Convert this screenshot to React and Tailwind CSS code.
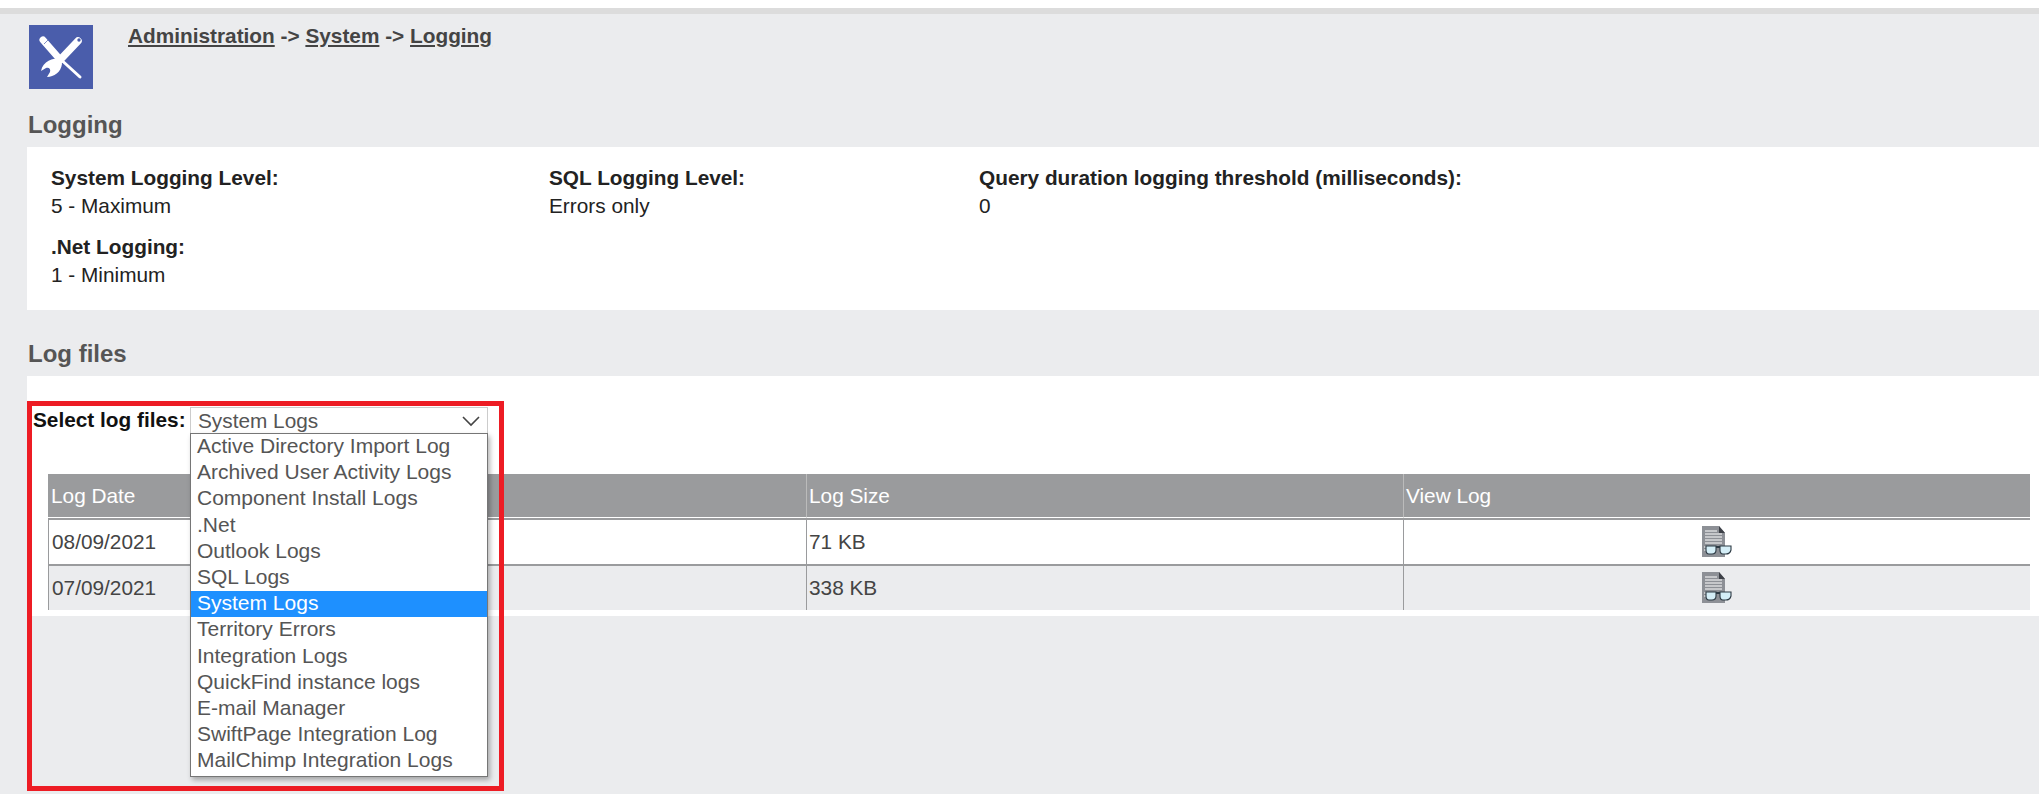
const LOG_TYPES = [
  'Active Directory Import Log',
  'Archived User Activity Logs',
  'Component Install Logs',
  '.Net',
  'Outlook Logs',
  'SQL Logs',
  'System Logs',
  'Territory Errors',
  'Integration Logs',
  'QuickFind instance logs',
  'E-mail Manager',
  'SwiftPage Integration Log',
  'MailChimp Integration Logs',
];

const LOG_ROWS = [
  { date: '08/09/2021', size: '71 KB', bg: 'bg-white' },
  { date: '07/09/2021', size: '338 KB', bg: 'bg-[#ebecee]' },
];

function ToolsIcon() {
  return (
    <svg viewBox="0 0 64 64" className="w-[64px] h-[64px] bg-[#4a5dab] shrink-0 mr-[35px]">
      {/* screwdriver */}
      <path d="M14 15 L28 31" stroke="#fff" strokeWidth="7" strokeLinecap="round" />
      <path d="M15 19 L20 14" stroke="#4a5dab" strokeWidth="0.7" />
      <path d="M28 31 L51 52" stroke="#fff" strokeWidth="3" strokeLinecap="round" />
      {/* wrench */}
      <path d="M49 16 L31 35" stroke="#fff" strokeWidth="7.5" strokeLinecap="round" />
      <path
        d="M31 33 C24 33 14 36 12 46 L17 43 C20 42 22 44 21 47 L18 52 C25 52 32 47 33 39 Z"
        fill="#fff"
      />
      <circle cx="50" cy="15" r="1.7" fill="#4a5dab" />
    </svg>
  );
}

function ViewLogIcon() {
  return (
    <svg viewBox="0 0 30 31" className="w-[30px] h-[31px] block mx-auto">
      <path d="M0 0 H17 L23 7 V31 H0 Z" fill="#8d9096" />
      <path d="M17 0 L23 7 H17 Z" fill="#3d4047" />
      <path d="M3 5 H15 M3 8 H20 M3 11 H20 M3 14 H20 M3 17 H20 M2 21 H4 M2 24 H4" stroke="#fff" strokeWidth="1" />
      <path d="M4 20 H14 V24 Q14 28 10 28 H7 Q4 28 4 24 Z" fill="#d4eef7" stroke="#2d3a44" strokeWidth="1.1" />
      <path d="M18 20 H29 V24 Q28 28 24 28 H21 Q18 28 18 24 Z" fill="#d4eef7" stroke="#2d3a44" strokeWidth="1.1" />
      <path d="M14 21 H18" stroke="#2d3a44" strokeWidth="2" />
    </svg>
  );
}

function Field({ label, value, className }) {
  return (
    <div className={className}>
      <p className="font-bold h-[28px] leading-[28px]">{label}</p>
      <p className="h-[28px] leading-[28px]">{value}</p>
    </div>
  );
}

export default function App() {
  return (
    <div className="h-[794px] bg-[#ebecee] text-[20.8px] text-[#222] overflow-hidden font-['Liberation_Sans',Arial,sans-serif]">
      <div className="h-[8px] bg-white" />
      <div className="h-[6px] bg-[#dcdcdc]" />

      {/* Breadcrumb */}
      <div className="flex items-start pl-[29px] pt-[11px] h-[100px]">
        <ToolsIcon />
        <div className="font-bold text-[#444] leading-[21px]">
          <a className="underline">Administration</a> -&gt; <a className="underline">System</a> -&gt; <a className="underline">Logging</a>
        </div>
      </div>

      <h2 className="pl-[28px] h-[33px] leading-[22px] text-[24px] font-bold text-[#555]">Logging</h2>

      {/* Settings */}
      <div className="ml-[27px] bg-white h-[163px] pl-[24px] pt-[17px]">
        <div className="flex">
          <Field className="w-[498px]" label="System Logging Level:" value="5 - Maximum" />
          <Field className="w-[430px]" label="SQL Logging Level:" value="Errors only" />
          <Field label="Query duration logging threshold (milliseconds):" value="0" />
        </div>
        <Field className="mt-[13px]" label=".Net Logging:" value="1 - Minimum" />
      </div>

      <h2 className="pl-[28px] mt-[33px] h-[33px] leading-[22px] text-[24px] font-bold text-[#555]">Log files</h2>

      {/* Log files */}
      <div className="relative ml-[27px] bg-white h-[240px] pt-[31px]">
        <div className="flex items-center h-[26px]">
          <span className="font-bold text-[#111] pl-[6px] w-[163px] whitespace-nowrap">Select log files:</span>
          <div className="flex items-center justify-between w-[298px] h-[26px] border border-[#ccc] border-b-0 pl-[7px] pr-[7px] text-[#555]">
            <span>System Logs</span>
            <svg viewBox="0 0 18 12" className="w-[18px] h-[12px]">
              <path d="M1 2 L9 10 L17 2" fill="none" stroke="#444" strokeWidth="1.6" />
            </svg>
          </div>
        </div>

        <table className="ml-[21px] mt-[41px] w-[1982px] table-fixed border-separate border-spacing-0 text-[#444]">
          <colgroup>
            <col className="w-[300px]" />
            <col className="w-[458px]" />
            <col className="w-[597px]" />
            <col />
          </colgroup>
          <thead>
            <tr className="bg-[#9a9b9d] text-white h-[44px] text-left">
              <th className="font-normal pl-[3px] border-b border-white">Log Date</th>
              <th className="font-normal border-b border-white" />
              <th className="font-normal pl-[2px] border-l border-b border-l-[#bbb] border-b-white">Log Size</th>
              <th className="font-normal pl-[2px] border-l border-b border-l-[#bbb] border-b-white">View Log</th>
            </tr>
          </thead>
          <tbody>
            {LOG_ROWS.map(row => (
              <tr key={row.date} className={`${row.bg} h-[46px]`}>
                <td className="pl-[3px] pb-[1px] border-l border-t-2 border-[#9a9b9d]">{row.date}</td>
                <td className="border-t-2 border-[#9a9b9d]" />
                <td className="pl-[2px] pb-[1px] border-l border-t-2 border-[#9a9b9d]">{row.size}</td>
                <td className="border-l border-t-2 border-[#9a9b9d] align-middle pb-[1px]">
                  <ViewLogIcon />
                </td>
              </tr>
            ))}
          </tbody>
        </table>

        {/* Open dropdown */}
        <ul className="absolute left-[163px] top-[57px] w-[298px] h-[344px] z-10 bg-white border border-[#767676] text-[#555] text-[21px] shadow-[2px_3px_5px_rgba(0,0,0,0.3)]">
          {LOG_TYPES.map(name => (
            <li
              key={name}
              className={`h-[26.2px] leading-[24px] pl-[6px] whitespace-nowrap ${name === 'System Logs' ? 'bg-[#1e90ff] text-white' : ''}`}
            >
              {name}
            </li>
          ))}
        </ul>

        {/* Red annotation */}
        <div className="absolute left-[0px] top-[25px] w-[477px] h-[390px] z-20 border-[5px] border-[#ed1c24] pointer-events-none" />
      </div>
    </div>
  );
}
